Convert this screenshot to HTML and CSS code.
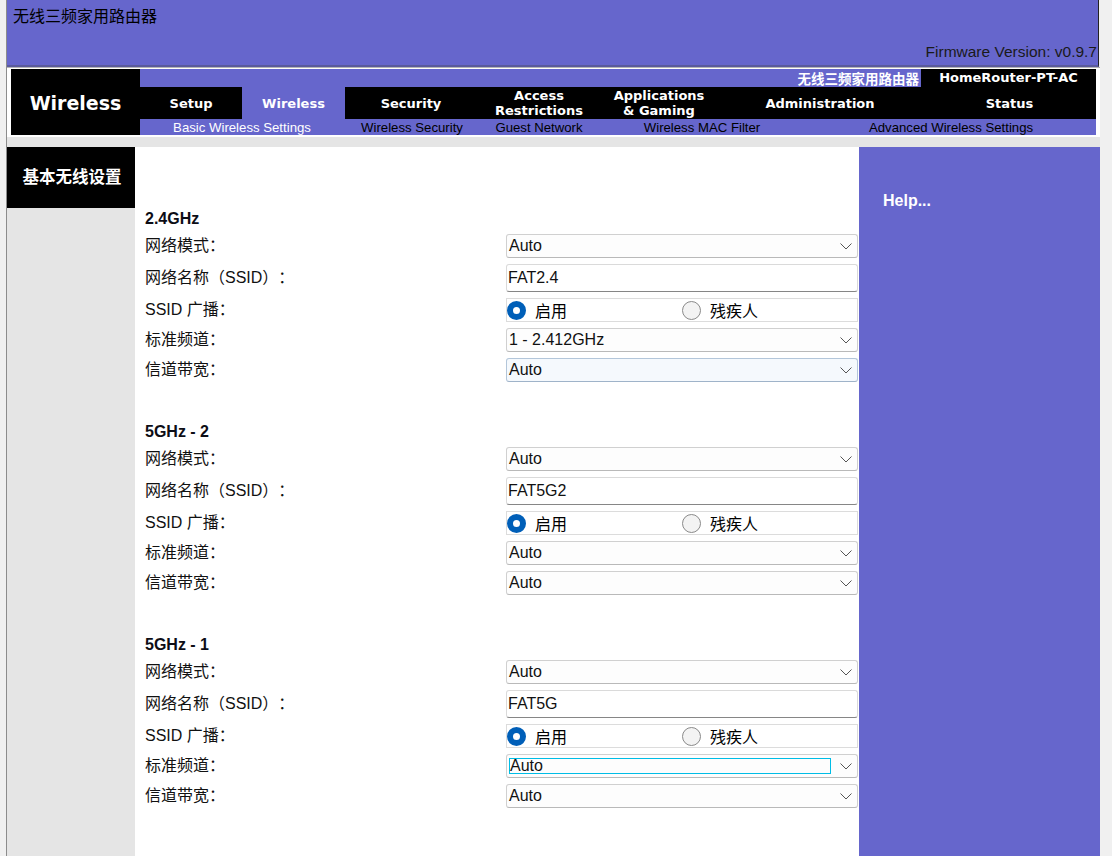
FILE: index.html
```html
<!DOCTYPE html>
<html lang="zh">
<head>
<meta charset="utf-8">
<title>无线三频家用路由器</title>
<link rel="stylesheet" href="styles.css">
</head>
<body>
<div class="page">
  <header class="top">
    <div class="brand-title">无线三频家用路由器</div>
    <div class="firmware">Firmware Version: v0.9.7</div>
  </header>

  <div class="navwrap">
    <div class="navbox">
      <div class="section-name">Wireless</div>
      <div class="navright">
        <div class="navtop">
          <div class="product">无线三频家用路由器</div>
          <div class="model">HomeRouter-PT-AC</div>
        </div>
        <div class="tabs">
          <div class="tab w-setup">Setup</div>
          <div class="tab w-wireless active">Wireless</div>
          <div class="tab w-security">Security</div>
          <div class="tab w-access">Access<br>Restrictions</div>
          <div class="tab w-apps">Applications<br>&amp; Gaming</div>
          <div class="tab w-admin">Administration</div>
          <div class="tab w-status">Status</div>
        </div>
        <div class="subtabs">
          <div class="sub s1 active">Basic Wireless Settings</div>
          <div class="sub s2">Wireless Security</div>
          <div class="sub s3">Guest Network</div>
          <div class="sub s4">Wireless MAC Filter</div>
          <div class="sub s5">Advanced Wireless Settings</div>
        </div>
      </div>
    </div>
  </div>

  <div class="band"></div>

  <div class="main">
    <aside class="side">
      <div class="side-title">基本无线设置</div>
    </aside>

    <div class="content">
      <section class="group">
        <div class="group-title">2.4GHz</div>
        <div class="row">
          <div class="label">网络模式：</div>
          <div class="control select"><span class="val">Auto</span><svg class="chev" viewBox="0 0 12 7" width="12" height="7"><path d="M0.5 0.5 L6 6 L11.5 0.5" fill="none" stroke="#555" stroke-width="1"/></svg></div>
        </div>
        <div class="row tall">
          <div class="label">网络名称（SSID）：</div>
          <div class="control textbox">FAT2.4</div>
        </div>
        <div class="row">
          <div class="label">SSID 广播：</div>
          <div class="control radios">
            <div class="radio-item"><span class="radio on"></span><span>启用</span></div>
            <div class="radio-item"><span class="radio"></span><span>残疾人</span></div>
          </div>
        </div>
        <div class="row">
          <div class="label">标准频道：</div>
          <div class="control select"><span class="val">1 - 2.412GHz</span><svg class="chev" viewBox="0 0 12 7" width="12" height="7"><path d="M0.5 0.5 L6 6 L11.5 0.5" fill="none" stroke="#555" stroke-width="1"/></svg></div>
        </div>
        <div class="row">
          <div class="label">信道带宽：</div>
          <div class="control select hover"><span class="val">Auto</span><svg class="chev" viewBox="0 0 12 7" width="12" height="7"><path d="M0.5 0.5 L6 6 L11.5 0.5" fill="none" stroke="#555" stroke-width="1"/></svg></div>
        </div>
      </section>

      <section class="group">
        <div class="group-title">5GHz - 2</div>
        <div class="row">
          <div class="label">网络模式：</div>
          <div class="control select"><span class="val">Auto</span><svg class="chev" viewBox="0 0 12 7" width="12" height="7"><path d="M0.5 0.5 L6 6 L11.5 0.5" fill="none" stroke="#555" stroke-width="1"/></svg></div>
        </div>
        <div class="row tall">
          <div class="label">网络名称（SSID）：</div>
          <div class="control textbox">FAT5G2</div>
        </div>
        <div class="row">
          <div class="label">SSID 广播：</div>
          <div class="control radios">
            <div class="radio-item"><span class="radio on"></span><span>启用</span></div>
            <div class="radio-item"><span class="radio"></span><span>残疾人</span></div>
          </div>
        </div>
        <div class="row">
          <div class="label">标准频道：</div>
          <div class="control select"><span class="val">Auto</span><svg class="chev" viewBox="0 0 12 7" width="12" height="7"><path d="M0.5 0.5 L6 6 L11.5 0.5" fill="none" stroke="#555" stroke-width="1"/></svg></div>
        </div>
        <div class="row">
          <div class="label">信道带宽：</div>
          <div class="control select"><span class="val">Auto</span><svg class="chev" viewBox="0 0 12 7" width="12" height="7"><path d="M0.5 0.5 L6 6 L11.5 0.5" fill="none" stroke="#555" stroke-width="1"/></svg></div>
        </div>
      </section>

      <section class="group">
        <div class="group-title">5GHz - 1</div>
        <div class="row">
          <div class="label">网络模式：</div>
          <div class="control select"><span class="val">Auto</span><svg class="chev" viewBox="0 0 12 7" width="12" height="7"><path d="M0.5 0.5 L6 6 L11.5 0.5" fill="none" stroke="#555" stroke-width="1"/></svg></div>
        </div>
        <div class="row tall">
          <div class="label">网络名称（SSID）：</div>
          <div class="control textbox">FAT5G</div>
        </div>
        <div class="row">
          <div class="label">SSID 广播：</div>
          <div class="control radios">
            <div class="radio-item"><span class="radio on"></span><span>启用</span></div>
            <div class="radio-item"><span class="radio"></span><span>残疾人</span></div>
          </div>
        </div>
        <div class="row">
          <div class="label">标准频道：</div>
          <div class="control select focused"><span class="val focus-ring">Auto</span><svg class="chev" viewBox="0 0 12 7" width="12" height="7"><path d="M0.5 0.5 L6 6 L11.5 0.5" fill="none" stroke="#555" stroke-width="1"/></svg></div>
        </div>
        <div class="row">
          <div class="label">信道带宽：</div>
          <div class="control select"><span class="val">Auto</span><svg class="chev" viewBox="0 0 12 7" width="12" height="7"><path d="M0.5 0.5 L6 6 L11.5 0.5" fill="none" stroke="#555" stroke-width="1"/></svg></div>
        </div>
      </section>
    </div>

    <aside class="help">
      <div class="help-title">Help...</div>
    </aside>
  </div>
</div>
</body>
</html>
```
FILE: styles.css
```css
html, body {
  margin: 0;
  padding: 0;
}
body {
  background: #f0f0f0;
  font-family: "Liberation Sans", "Noto Sans CJK SC", sans-serif;
  color: #000;
  height: 856px;
  overflow: hidden;
  text-spacing-trim: space-all;
}
.page {
  margin-left: 6px;
  width: 1094px;
  border-left: 1px solid #8c8c8c;
  box-sizing: border-box;
}

/* header */
.top {
  height: 57px;
  margin-right: 1px;
  background: #6666cc;
  border-right: 1px solid #222;
  border-bottom: 2px solid #5a5a9c;
  display: flex;
  flex-direction: column;
  justify-content: space-between;
  padding: 4px 1px 4px 6px;
  box-sizing: content-box;
}
.brand-title {
  font-family: "Noto Sans CJK SC", sans-serif;
  font-size: 16px;
  line-height: 22px;
  color: #000;
}
.firmware {
  text-align: right;
  font-size: 15.5px;
  line-height: 18px;
  color: #1a1a1a;
}

/* nav */
.navwrap {
  background: #fff;
  border-top: 1px solid #b4b4b4;
  padding: 1px 4px 2px 4px;
}
.navbox {
  display: flex;
  height: 66px;
}
.section-name {
  width: 129px;
  background: #000;
  color: #fff;
  font-family: "DejaVu Sans", sans-serif;
  font-weight: bold;
  font-size: 19px;
  display: flex;
  align-items: center;
  justify-content: center;
  padding-top: 2px;
  box-sizing: border-box;
}
.navright {
  flex: 1;
  display: flex;
  flex-direction: column;
}
.navtop {
  height: 18px;
  display: flex;
  background: #6666cc;
}
.product {
  flex: 1;
  text-align: right;
  color: #fff;
  font-family: "Noto Sans CJK SC", sans-serif;
  font-weight: bold;
  font-size: 13.5px;
  line-height: 18px;
  padding-right: 2px;
}
.model {
  width: 175px;
  background: #000;
  color: #fff;
  font-family: "DejaVu Sans", sans-serif;
  font-weight: bold;
  font-size: 13px;
  line-height: 18px;
  text-align: center;
}
.tabs {
  height: 32px;
  display: flex;
  background: #000;
}
.tab {
  display: flex;
  align-items: center;
  justify-content: center;
  text-align: center;
  color: #fff;
  font-family: "DejaVu Sans", sans-serif;
  font-weight: bold;
  font-size: 13px;
  line-height: 15px;
}
.tab.active { background: #6666cc; }
.w-setup { width: 102px; }
.w-wireless { width: 103px; }
.w-security { width: 132px; }
.w-access { width: 124px; }
.w-apps { width: 116px; }
.w-admin { width: 206px; }
.w-status { width: 173px; }

.subtabs {
  height: 16px;
  display: flex;
  background: #6666cc;
}
.sub {
  font-size: 13.2px;
  line-height: 17px;
  color: #000;
  text-align: center;
  white-space: nowrap;
}
.sub.active { color: #fff; }
.s1 { width: 204px; }
.s2 { width: 136px; }
.s3 { width: 118px; }
.s4 { width: 208px; }
.s5 { width: 290px; }

.band {
  height: 10px;
  background: #e5e5e5;
}

/* main */
.main {
  display: flex;
  height: 709px;
}
.side {
  width: 128px;
  background: #e5e5e5;
}
.side-title {
  height: 61px;
  box-sizing: border-box;
  background: #000;
  color: #fff;
  display: flex;
  align-items: center;
  justify-content: center;
  font-family: "Noto Sans CJK SC", sans-serif;
  font-weight: bold;
  font-size: 16.5px;
  padding: 0 0 3px 2px;
}
.content {
  width: 724px;
  background: #fff;
  padding: 60px 1px 0 10px;
  box-sizing: border-box;
}
.group {
  margin-bottom: 35px;
}
.group-title {
  height: 24px;
  font-weight: bold;
  font-size: 16px;
  line-height: 24px;
  color: #0d0d16;
}
.row {
  display: flex;
  align-items: center;
  height: 30px;
}
.row.tall { height: 34px; }
.label {
  width: 361px;
  font-size: 16px;
  line-height: 20px;
  color: #111;
}
.control {
  width: 352px;
  box-sizing: border-box;
  font-size: 16px;
}

.select {
  height: 24px;
  border: 1px solid #d0d0d0;
  border-bottom-color: #b9b9b9;
  border-radius: 3px;
  background: #fdfdfd;
  display: flex;
  align-items: center;
  justify-content: space-between;
  padding: 0 5px 0 2px;
  color: #111;
}
.select.hover {
  background: #f5f9fd;
  border-color: #b3c6da;
  border-bottom-color: #9fb3c9;
}
.focus-ring {
  display: block;
  width: 322px;
  height: 16px;
  box-sizing: border-box;
  border: 1px solid #00bde6;
  line-height: 14px;
}
.chev {
  display: block;
  flex: none;
}

.textbox {
  height: 28px;
  border: 1px solid #dadada;
  border-bottom-color: #868686;
  border-radius: 3px;
  background: #fff;
  padding-left: 1px;
  line-height: 26px;
  color: #111;
}

.radios {
  height: 24px;
  border: 1px solid #dcdcdc;
  display: grid;
  grid-template-columns: 175px 175px;
  align-items: center;
  background: #fff;
}
.radio-item {
  display: flex;
  align-items: center;
  gap: 9px;
  font-family: "Noto Sans CJK SC", sans-serif;
  font-size: 16px;
  line-height: 20px;
}
.radio {
  width: 19px;
  height: 19px;
  box-sizing: border-box;
  border-radius: 50%;
  border: 1px solid #8a8a8a;
  background: #f3f3f3;
  flex: none;
}
.radio.on {
  border: 6px solid #005fb8;
  background: #fff;
}

.help {
  flex: 1;
  background: #6666cc;
  padding: 44px 0 0 24px;
}
.help-title {
  color: #fff;
  font-weight: bold;
  font-size: 16px;
  line-height: 20px;
}
```
